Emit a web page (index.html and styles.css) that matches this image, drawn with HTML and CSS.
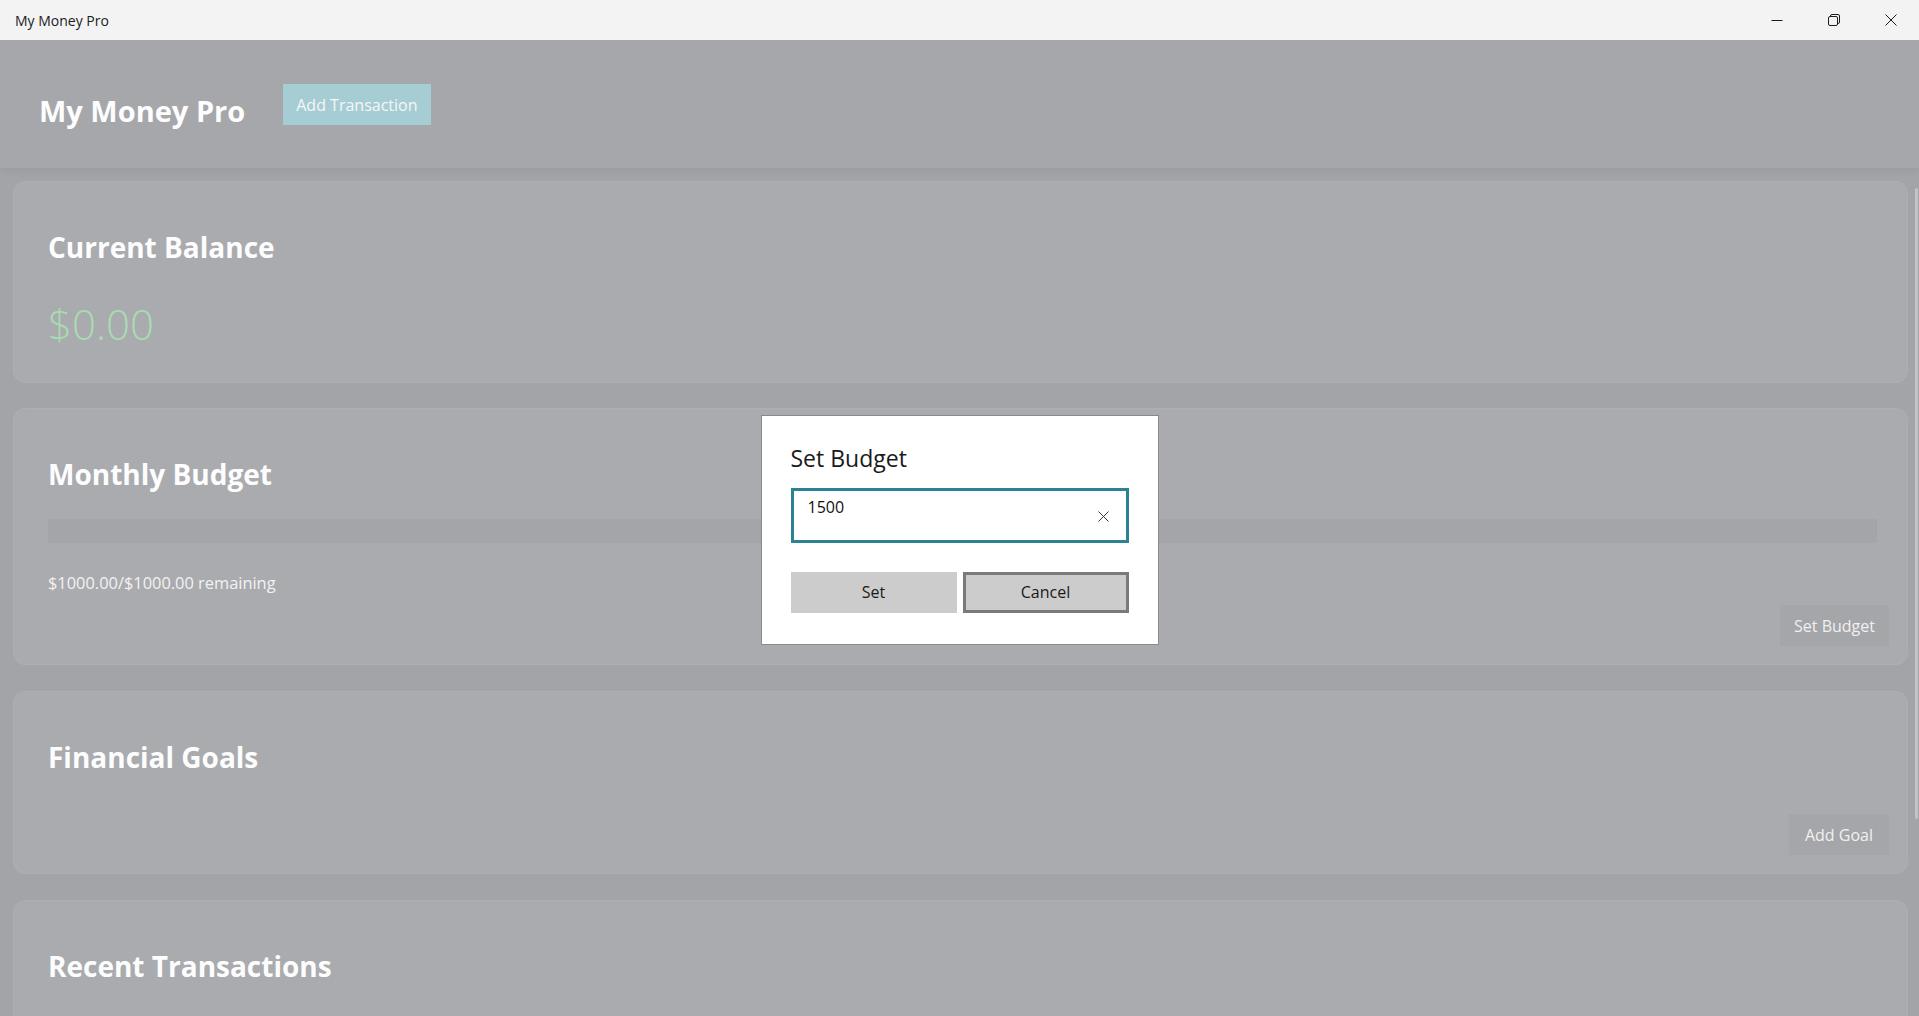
FILE: index.html
```html
<!DOCTYPE html>
<html lang="en">
<head>
    <meta charset="UTF-8">
    <meta name="viewport" content="width=device-width, initial-scale=1.0">
    <title>My Money Pro</title>
    <link rel="stylesheet" href="styles.css">
</head>
<body>
    <div class="titlebar">
        <span class="app-name">My Money Pro</span>
        <div class="caption">
            <button class="cap-btn" title="Minimize">
                <svg width="12" height="12" viewBox="0 0 12 12"><path d="M0.5 6.5 H11.5" stroke="#1c1c1c" stroke-width="1" fill="none"/></svg>
            </button>
            <button class="cap-btn" title="Restore">
                <svg width="12" height="12" viewBox="0 0 12 12" fill="none" stroke="#1c1c1c" stroke-width="1">
                    <rect x="0.5" y="2.5" width="9" height="9" rx="1.5"/>
                    <path d="M2.5 2.5 V2 a1.5 1.5 0 0 1 1.5 -1.5 H10 a1.5 1.5 0 0 1 1.5 1.5 V8 a1.5 1.5 0 0 1 -1.5 1.5 H9.5"/>
                </svg>
            </button>
            <button class="cap-btn" title="Close">
                <svg width="12" height="12" viewBox="0 0 12 12"><path d="M0.5 0.5 L11.5 11.5 M11.5 0.5 L0.5 11.5" stroke="#1c1c1c" stroke-width="1" fill="none"/></svg>
            </button>
        </div>
    </div>

    <div class="app">
        <header class="topbar">
            <h1>My Money Pro</h1>
            <button class="accent-btn">Add Transaction</button>
        </header>

        <main class="content">
            <section class="card balance-card">
                <h2>Current Balance</h2>
                <div class="balance">$0.00</div>
            </section>

            <section class="card budget-card">
                <h2>Monthly Budget</h2>
                <div class="progress"><div class="progress-fill" style="width: 0%;"></div></div>
                <div class="budget-text">$1000.00/$1000.00 remaining</div>
                <button class="card-btn">Set Budget</button>
            </section>

            <section class="card goals-card">
                <h2>Financial Goals</h2>
                <button class="card-btn">Add Goal</button>
            </section>

            <section class="card transactions-card">
                <h2>Recent Transactions</h2>
            </section>
        </main>

        <div class="scrollbar"></div>

        <!-- modal dialog over the dimmed page -->
        <div class="smoke">
            <div class="dialog">
                <div class="dialog-title">Set Budget</div>
                <div class="textbox">
                    <span class="textbox-value">1500</span>
                    <svg class="clear-icon" width="11" height="11" viewBox="0 0 11 11"><path d="M0.5 0.5 L10.5 10.5 M10.5 0.5 L0.5 10.5" stroke="#333" stroke-width="1" fill="none"/></svg>
                </div>
                <div class="dialog-buttons">
                    <button class="dlg-btn">Set</button>
                    <button class="dlg-btn dlg-btn-focus">Cancel</button>
                </div>
            </div>
        </div>
    </div>
</body>
</html>
```

FILE: styles.css
```css
body {
    font-family: "Open Sans", "Noto Sans", sans-serif;
    margin: 0;
    padding: 0;
    background-color: #a3a4a8;
    overflow: hidden;
}
button {
    font-family: inherit;
    cursor: pointer;
}
.titlebar {
    height: 40px;
    background-color: #f3f3f3;
    display: flex;
    align-items: center;
    justify-content: space-between;
}
.app-name {
    font-size: 14px;
    line-height: 40px;
    color: #1b1b1b;
    padding-left: 15px;
    padding-top: 1px;
}
.caption {
    display: flex;
    height: 40px;
}
.cap-btn {
    width: 57px;
    height: 40px;
    border: none;
    background: transparent;
    display: flex;
    align-items: center;
    justify-content: center;
    padding: 0;
}
.app {
    position: relative;
    height: 976px;
    overflow: hidden;
}
.topbar {
    height: 128px;
    box-sizing: border-box;
    background-color: #a6a7ab;
    display: flex;
    align-items: flex-start;
    padding: 44px 0 0 39px;
    box-shadow: 0 3px 8px rgba(0,0,0,0.05);
    position: relative;
}
h1 {
    margin: 12px 0 0 0;
    font-size: 29px;
    line-height: 29px;
    font-weight: 700;
    color: #fdfdfd;
}
.accent-btn {
    margin-left: 38px;
    height: 41px;
    padding: 0 13px;
    border: none;
    background-color: #a7cdd4;
    color: #f6f6f6;
    font-size: 16px;
}
.content {
    padding: 13px 11px 0 13px;
    display: flex;
    flex-direction: column;
    gap: 26px;
}
.card {
    background-color: #aaabaf;
    border: 1px solid #aeafb3;
    border-radius: 12px;
    padding: 45px 30px 18px 34px;
    display: flex;
    flex-direction: column;
}
h2 {
    margin: 0;
    font-size: 28px;
    line-height: 40px;
    font-weight: 700;
    color: #fdfdfd;
}
.balance-card {
    padding-bottom: 30px;
    margin-bottom: -1px;
}
.balance {
    margin-top: 29px;
    font-size: 42px;
    line-height: 56px;
    font-weight: 350;
    color: #a9dbb1;
}
.progress {
    margin-top: 25px;
    height: 24px;
    background-color: #a4a5a9;
}
.progress-fill {
    height: 100%;
    background-color: #a7cdd4;
}
.budget-text {
    margin-top: 29px;
    font-size: 16.4px;
    line-height: 22px;
    color: #f2f2f2;
}
.card-btn {
    align-self: flex-end;
    margin-top: 11px;
    margin-right: -12px;
    height: 41px;
    padding: 0 14px;
    border: none;
    background-color: #a5a6aa;
    color: #f0f0f0;
    font-size: 16px;
}
.goals-card .card-btn {
    margin-top: 37px;
    padding: 0 16px;
}
.transactions-card {
    min-height: 200px;
}
.scrollbar {
    position: absolute;
    right: 1px;
    top: 148px;
    width: 3px;
    height: 631px;
    border-radius: 2px;
    background-color: #c2c3c6;
}
.smoke {
    position: absolute;
    inset: 0;
    display: flex;
    align-items: center;
    justify-content: center;
    padding-top: 3px;
    box-sizing: border-box;
}
.dialog {
    width: 398px;
    box-sizing: border-box;
    background-color: #fff;
    border: 1px solid #8a8a8a;
    padding: 25px 29px 31px 29px;
}
.dialog-title {
    font-size: 23px;
    line-height: 32px;
    color: #1a1a1a;
    padding-top: 1px;
}
.textbox {
    margin-top: 14px;
    height: 55px;
    box-sizing: border-box;
    border: 3px solid #2b8290;
    display: flex;
    align-items: center;
    padding: 0 17px 0 14px;
}
.textbox-value {
    flex: 1;
    align-self: flex-start;
    padding-top: 5px;
    font-size: 16px;
    line-height: 22px;
    color: #111;
}
.clear-icon {
    margin-top: 2px;
}
.dialog-buttons {
    margin-top: 29px;
    display: grid;
    grid-template-columns: 1fr 1fr;
    gap: 6px;
}
.dlg-btn {
    height: 41px;
    border: none;
    background-color: #cccccc;
    color: #1a1a1a;
    font-size: 16px;
    padding: 0;
}
.dlg-btn-focus {
    border: 3px solid #7a7a7a;
}
```
